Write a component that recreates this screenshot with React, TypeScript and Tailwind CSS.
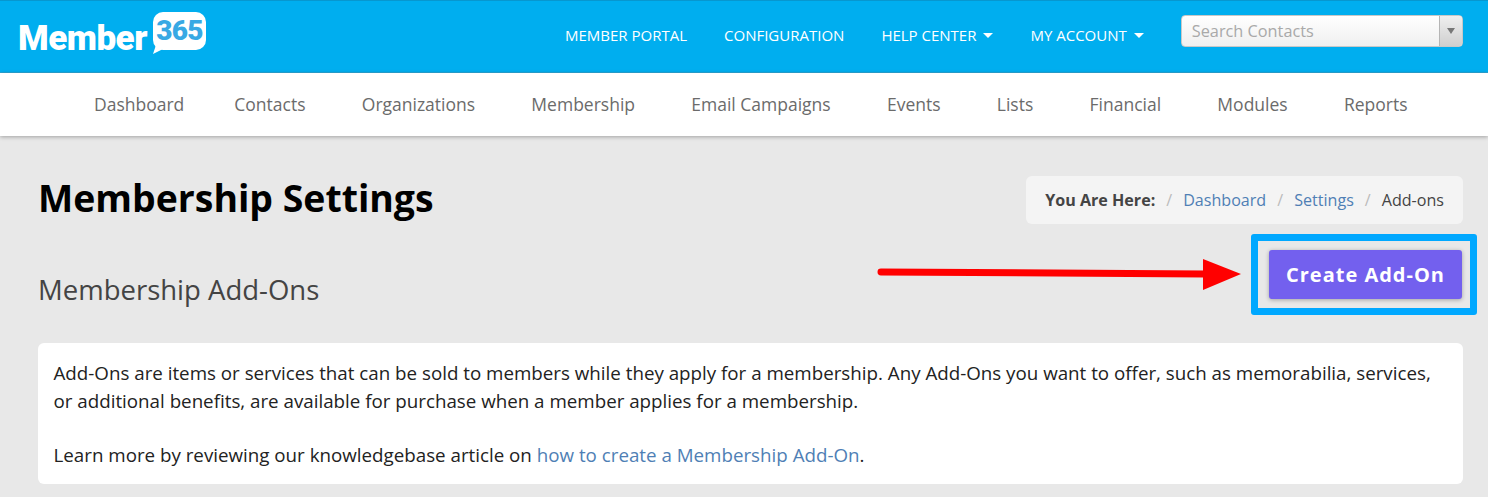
const topLinks = [
  { label: "MEMBER PORTAL" },
  { label: "CONFIGURATION" },
  { label: "HELP CENTER", caret: true },
  { label: "MY ACCOUNT", caret: true },
];
const navLinks = ["Contacts", "Organizations", "Membership", "Email Campaigns", "Events", "Lists", "Financial", "Modules", "Reports"];

function Logo() {
  return (
    <div className="relative flex h-[71px] w-[190px] shrink-0 items-end font-['Roboto',sans-serif] font-black text-white">
      <span className="mb-[14px] text-[35px] leading-[38px] tracking-[-0.5px]">Member</span>
      <div className="absolute left-[135px] top-[11px] flex h-[38px] w-[53px] items-center justify-center rounded-[10px] bg-white text-[28px] leading-none tracking-[-0.8px] text-[#38a9e4]">
        365
      </div>
      <svg className="absolute left-[135px] top-[44px]" width="12" height="10" viewBox="0 0 12 10">
        <path d="M3 0 L12 3 L0 9 Z" fill="#fff" />
      </svg>
    </div>
  );
}

export default function App() {
  return (
    <div className="relative h-[497px] w-[1488px] overflow-hidden bg-[#e8e8e8] font-['Open_Sans',sans-serif]">
      <header className="flex h-[73px] items-start border-t border-b border-t-[#0797cf] border-b-[#2aa5d6] bg-[#00aeef] pl-[18px]">
        <Logo />
        <nav className="ml-[357px] flex h-[68px] items-center gap-[37px] text-[15px] text-white">
          {topLinks.map((l) => (
            <span key={l.label} className="flex items-center gap-[7px]">
              {l.label}
              {l.caret && <span className="h-0 w-0 border-x-[5px] border-t-[5px] border-x-transparent border-t-white" />}
            </span>
          ))}
        </nav>
        <div className="ml-[37px] mt-[14px] flex h-[32px] w-[282px] overflow-hidden rounded-[4px] border border-[#c8c8c8] bg-gradient-to-b from-white to-[#f0f0f0]">
          <span className="flex-1 pl-[10px] text-[16.3px] leading-[30px] text-[#a9a9a9]">Search Contacts</span>
          <span className="flex w-[23px] items-center justify-center border-l border-[#b5b5b5] bg-gradient-to-b from-[#efefef] to-[#cfcfcf]">
            <span className="h-0 w-0 border-x-[4px] border-t-[6px] border-x-transparent border-t-[#777]" />
          </span>
        </div>
      </header>

      <nav className="flex h-[63px] items-center bg-white pl-[94px] text-[17.5px] text-[#6b6b6b] shadow-[0_1px_4px_rgba(0,0,0,0.3)]">
        <span className="mr-[50px]">Dashboard</span>
        <div className="flex items-center gap-[56.25px]">
          {navLinks.map((n) => (
            <span key={n}>{n}</span>
          ))}
        </div>
      </nav>

      <main className="px-[38px]">
        <div className="flex items-start justify-between pt-[40px]">
          <h1 className="text-[37.4px] font-bold leading-[44px] text-black">Membership Settings</h1>
          <div className="-mr-[13px] flex h-[48px] items-center rounded-[6px] bg-[#f4f4f4] px-[19px] text-[16.1px] text-[#444]">
            <span className="font-bold">You Are Here:</span>
            <span className="mx-[11px] text-[#bbb]">/</span>
            <span className="text-[#4f7fb5]">Dashboard</span>
            <span className="mx-[11px] text-[#bbb]">/</span>
            <span className="text-[#4f7fb5]">Settings</span>
            <span className="mx-[11px] text-[#bbb]">/</span>
            <span>Add-ons</span>
          </div>
        </div>

        <div className="mt-[10px] flex items-start justify-between">
          <h2 className="mt-[38px] text-[27.5px] leading-[36px] text-[#444]">Membership Add-Ons</h2>
          <div className="-mr-[27px] rounded-[3px] border-[7px] border-[#00a8ff] py-[9px] pl-[11px] pr-[8px]">
            <button className="block h-[49px] w-[193px] rounded-[3px] bg-[#7360ee] text-[20px] font-bold tracking-[1px] text-white shadow-[0_1px_4px_rgba(0,0,0,0.3)]">
              Create Add-On
            </button>
          </div>
        </div>

        <section className="-mr-[13px] mt-[28px] h-[141px] rounded-[6px] bg-white pl-[15.5px] pr-[16px] pt-[16px] text-[18.75px] leading-[28px] text-[#222]">
          <p>
            Add-Ons are items or services that can be sold to members while they apply for a membership. Any Add-Ons you want to offer, such as memorabilia, services, or additional benefits, are available for purchase when a member applies for a membership.
          </p>
          <p className="mt-[26px]">
            Learn more by reviewing our knowledgebase article on <span className="text-[#4f7fb5]">how to create a Membership Add-On</span>.
          </p>
        </section>
      </main>

      <svg className="absolute left-[875px] top-[255px]" width="370" height="38" viewBox="0 0 370 38">
        <path d="M6 17 L330 19" stroke="#ff0000" strokeWidth="7" strokeLinecap="round" fill="none" />
        <path d="M328 4 L366 19 L328 35 Z" fill="#ff0000" />
      </svg>
    </div>
  );
}
